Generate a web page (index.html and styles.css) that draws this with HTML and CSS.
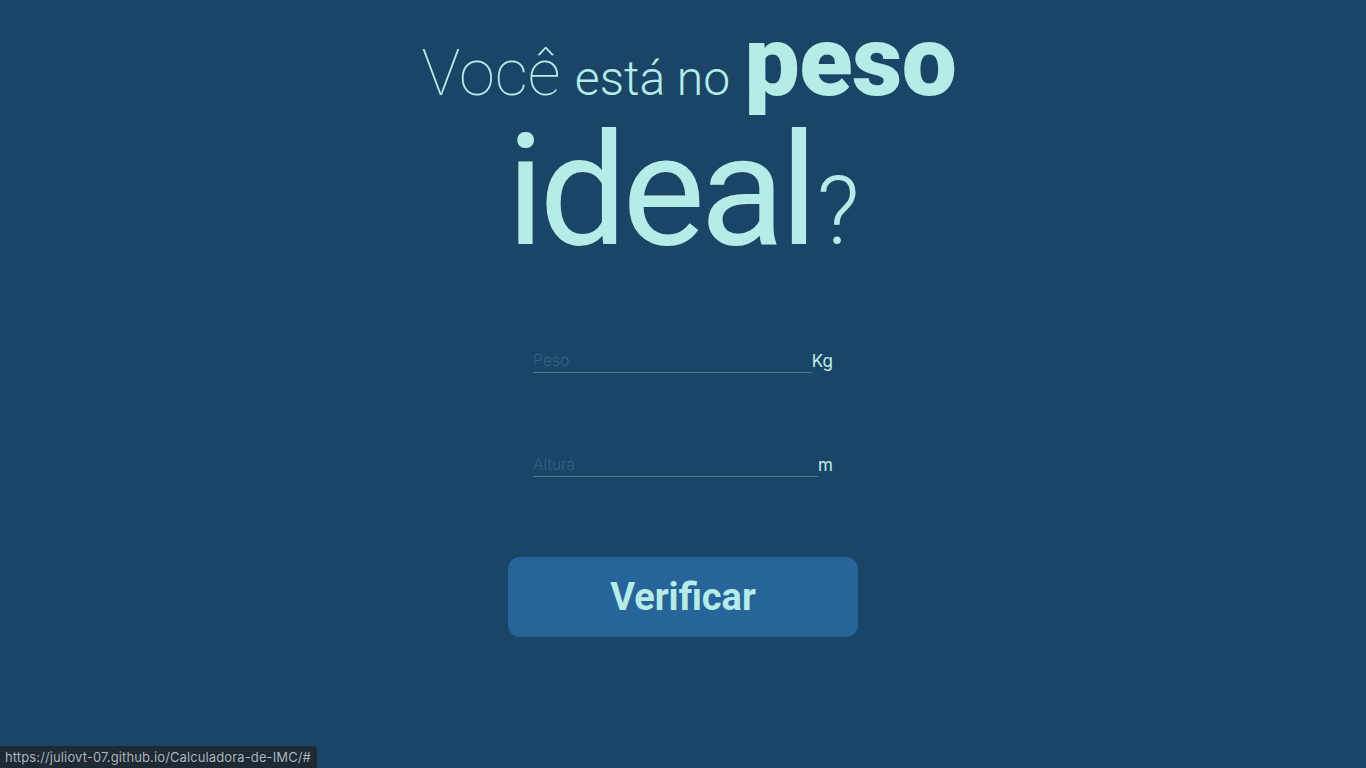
FILE: index.html
```html
<!DOCTYPE html>
<html lang="pt-BR">
<head>
<meta charset="utf-8">
<title>Calculadora de IMC</title>
<link rel="stylesheet" href="styles.css">
</head>
<body>
<main class="page">
  <h1 class="title">
    <span class="line1"><span class="voce">Você</span> <span class="esta">está no</span> <span class="peso">peso</span></span>
    <span class="line2"><span class="ideal">ideal</span><span class="q">?</span></span>
  </h1>
  <form class="form">
    <div class="field">
      <input class="input" type="text" placeholder="Peso">
      <span class="unit">Kg</span>
    </div>
    <div class="field field-altura">
      <input class="input" type="text" placeholder="Altura">
      <span class="unit">m</span>
    </div>
    <button class="btn" type="button">Verificar</button>
  </form>
</main>
<div class="status">https://juliovt-07.github.io/Calculadora-de-IMC/#</div>
</body>
</html>
```

FILE: styles.css
```css
html, body {
  margin: 0;
  padding: 0;
  height: 100%;
}
body {
  background: #1b4567;
  color: #b6ece7;
  font-family: Roboto, "Noto Sans", sans-serif;
  overflow: hidden;
}
.page {
  display: flex;
  flex-direction: column;
  align-items: center;
}
.title {
  margin: 0;
  display: flex;
  flex-direction: column;
  align-items: center;
  font-weight: normal;
}
.line1 {
  display: block;
  height: 100px;
  line-height: 1;
  margin-top: 13px;
  margin-left: 12px;
  white-space: nowrap;
  font-size: 58px;
}
.voce {
  font-weight: 100;
  font-size: 65px;
}
.esta {
  font-weight: 300;
  font-size: 48px;
}
.peso {
  font-weight: 900;
  font-size: 98px;
  letter-spacing: -0.5px;
}
.line2 {
  display: block;
  line-height: 1;
  white-space: nowrap;
}
.ideal {
  font-weight: 400;
  font-size: 156px;
  letter-spacing: -5px;
}
.q {
  font-weight: 300;
  font-size: 94px;
  margin-left: 4px;
}
.form {
  display: flex;
  flex-direction: column;
  align-items: center;
  margin-top: 80px;
}
.field {
  display: flex;
  align-items: flex-end;
  width: 300px;
}
.field-altura {
  margin-top: 80px;
}
.input {
  flex: 1;
  min-width: 0;
  background: transparent;
  border: none;
  border-bottom: 1px solid #4f7b95;
  color: #b6ece7;
  font-family: Inter, Roboto, sans-serif;
  font-weight: 200;
  font-size: 16px;
  padding: 0 0 1px 0;
  height: 22px;
  outline: none;
}
.input::placeholder {
  color: #3f6c88;
  font-weight: 200;
}
.unit {
  font-family: Inter, Roboto, sans-serif;
  font-size: 17px;
  color: #c4eeea;
  line-height: 22px;
  position: relative;
  top: -1px;
}
.btn {
  margin-top: 80px;
  width: 350px;
  height: 80px;
  border: none;
  border-radius: 12px;
  background: #26649a;
  color: #b6ece7;
  font-family: Roboto, sans-serif;
  font-weight: 700;
  font-size: 38px;
  cursor: pointer;
}
.status {
  position: fixed;
  left: 0;
  bottom: 0;
  height: 22px;
  padding: 0 6px 0 5px;
  background: #1d2933;
  color: #aab4bc;
  font-family: Inter, "Noto Sans", sans-serif;
  font-size: 13px;
  letter-spacing: 0.12px;
  line-height: 22px;
  border-top-right-radius: 4px;
}
```
